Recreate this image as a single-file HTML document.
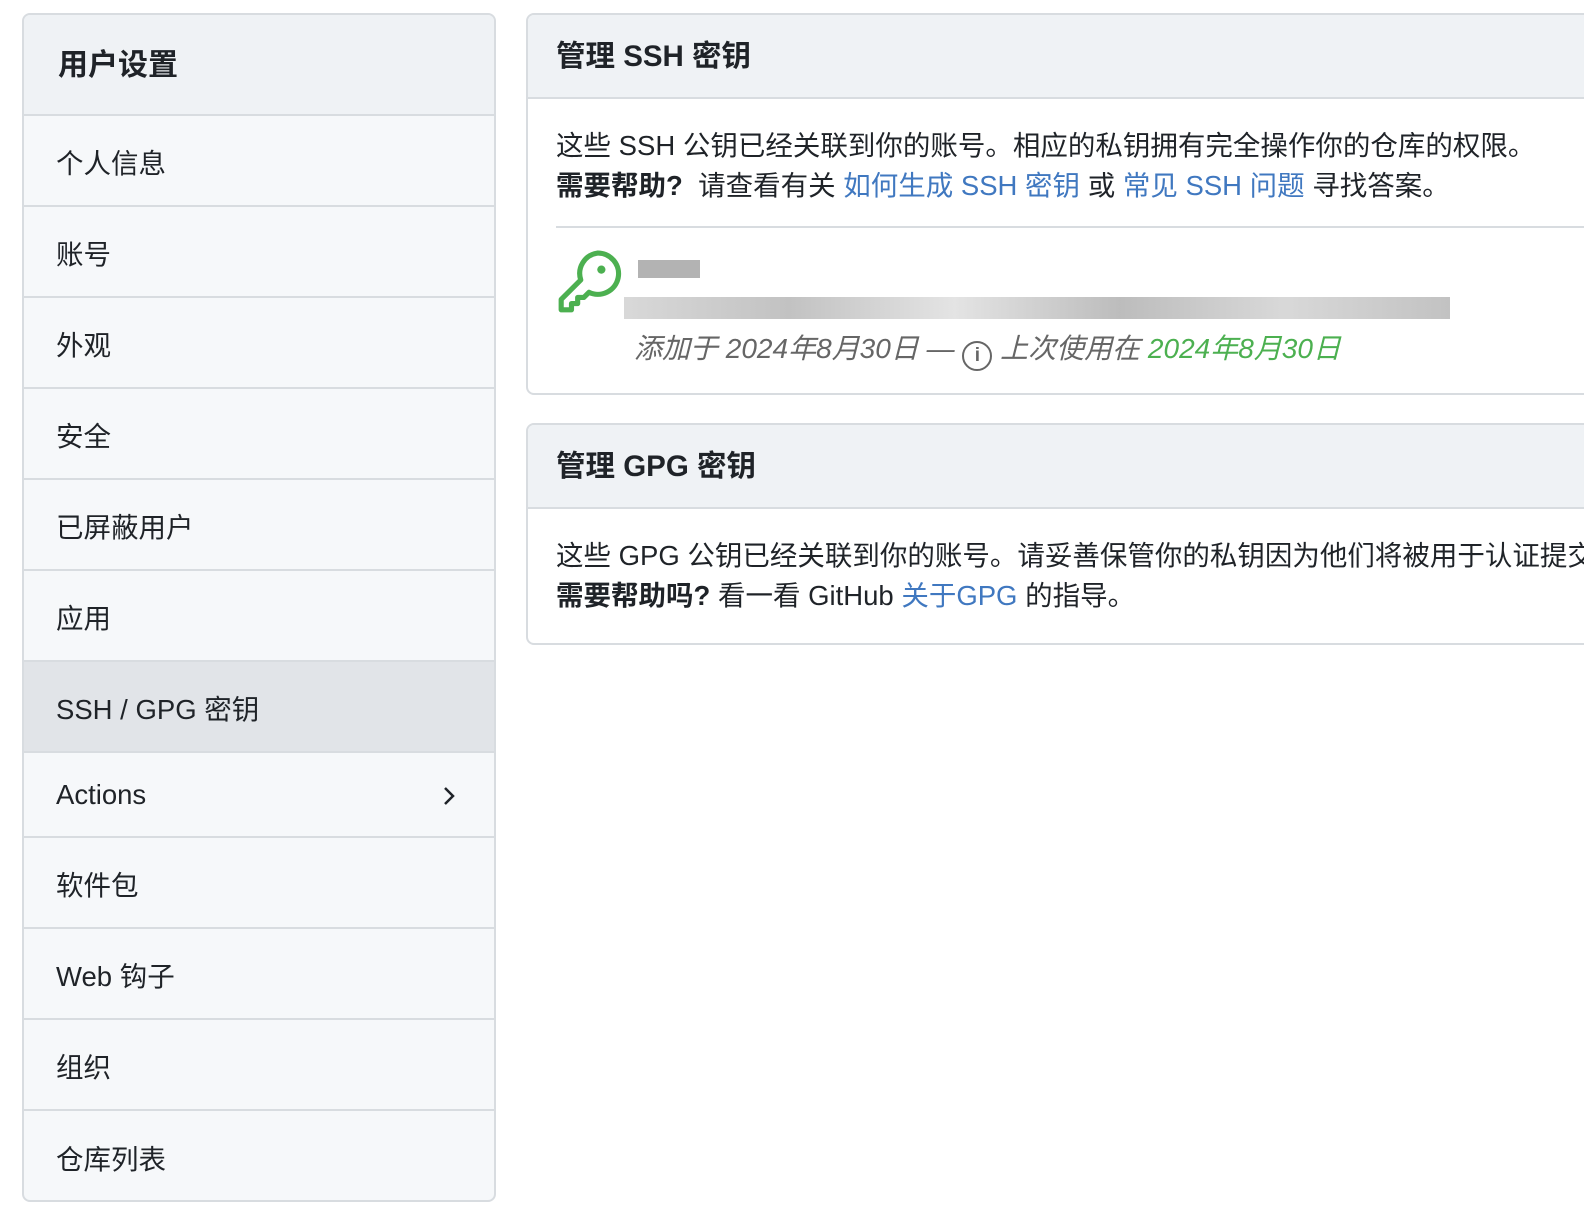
<!DOCTYPE html>
<html><head><meta charset="utf-8"><style>
*{box-sizing:border-box;margin:0;padding:0}
body{width:1584px;height:1230px;overflow:hidden;background:#fff;font-family:"Liberation Sans","Noto Sans CJK SC",sans-serif;color:#1f2328;position:relative}
.side{position:absolute;left:22px;top:13px;width:474px;height:1189px;border:2px solid #d8dce0;border-radius:8px;overflow:hidden;background:#f6f8fa}
.side .h{height:101px;background:#eff2f5;border-bottom:2px solid #d8dce0;font-size:30px;font-weight:bold;padding-left:34px;line-height:101px}
.side .i{height:91px;border-bottom:2px solid #d8dce0;font-size:27.5px;padding-left:32px;display:flex;align-items:center;position:relative}
.side .i.a{background:#e1e4e8}
.side .i.s{height:85px}
.side .i:last-child{border-bottom:none}
.box{position:absolute;left:526px;width:1100px;border:2px solid #d8dce0;border-radius:8px;overflow:hidden}
.box .h{height:84px;background:#eff2f5;border-bottom:2px solid #d8dce0;font-size:29.5px;font-weight:bold;padding-left:28px;line-height:84px}
.p{font-size:27.5px;line-height:40px;padding-left:28px;white-space:nowrap}
a{color:#4078c0;text-decoration:none}
</style></head><body>
<div class="side">
<div class="h">用户设置</div>
<div class="i">个人信息</div>
<div class="i">账号</div>
<div class="i">外观</div>
<div class="i">安全</div>
<div class="i">已屏蔽用户</div>
<div class="i">应用</div>
<div class="i a">SSH / GPG 密钥</div>
<div class="i s">Actions<svg style="position:absolute;left:418px;top:32px" width="14" height="22" viewBox="0 0 14 22"><path d="M3 3l8 8-8 8" fill="none" stroke="#1f2328" stroke-width="2.5"/></svg></div>
<div class="i">软件包</div>
<div class="i">Web 钩子</div>
<div class="i">组织</div>
<div class="i">仓库列表</div>
</div>

<div class="box" style="top:13px;height:382px">
<div class="h">管理 SSH 密钥</div>
<div class="p" style="margin-top:27px">这些 SSH 公钥已经关联到你的账号。相应的私钥拥有完全操作你的仓库的权限。</div>
<div class="p"><b>需要帮助?</b>&nbsp; 请查看有关 <a>如何生成 SSH 密钥</a> 或 <a>常见 SSH 问题</a> 寻找答案。</div>
<div style="position:absolute;left:28px;right:0;top:211px;border-top:2px solid #d8dce0"></div>
<svg style="position:absolute;left:28px;top:234px" width="66" height="68" viewBox="0 0 64 66"><path d="M40 4a20 20 0 1 1-8 38l-5 5h-6v6h-6v6H5v-10l19-19A20 20 0 0 1 40 4z" fill="none" stroke="#4cb050" stroke-width="5" stroke-linejoin="round"/><circle cx="44" cy="20" r="4" fill="#4cb050"/></svg>
<div style="position:absolute;left:110px;top:245px;width:62px;height:18px;background:#a0a0a0;opacity:.8"></div>
<div style="position:absolute;left:96px;top:282px;width:826px;height:22px;background:linear-gradient(90deg,#c8c8c8,#a8a8a8 20%,#d8d8d8 40%,#a0a0a0 60%,#c8c8c8 80%,#a8a8a8);opacity:.7"></div>
<div style="position:absolute;left:106px;top:312px;font-size:28px;font-style:italic;color:#666;white-space:nowrap">添加于 2024年8月30日 — <span style="display:inline-block;width:30px;height:30px;border:2.5px solid #666;border-radius:50%;font-size:19px;text-align:center;line-height:25px;font-style:normal;font-weight:bold;vertical-align:-3px">i</span> 上次使用在 <span style="color:#4cb050">2024年8月30日</span></div>
</div>

<div class="box" style="top:423px;height:222px">
<div class="h">管理 GPG 密钥</div>
<div class="p" style="margin-top:27px">这些 GPG 公钥已经关联到你的账号。请妥善保管你的私钥因为他们将被用于认证提交。</div>
<div class="p"><b>需要帮助吗?</b> 看一看 GitHub <a>关于GPG</a> 的指导。</div>
</div>
</body></html>
